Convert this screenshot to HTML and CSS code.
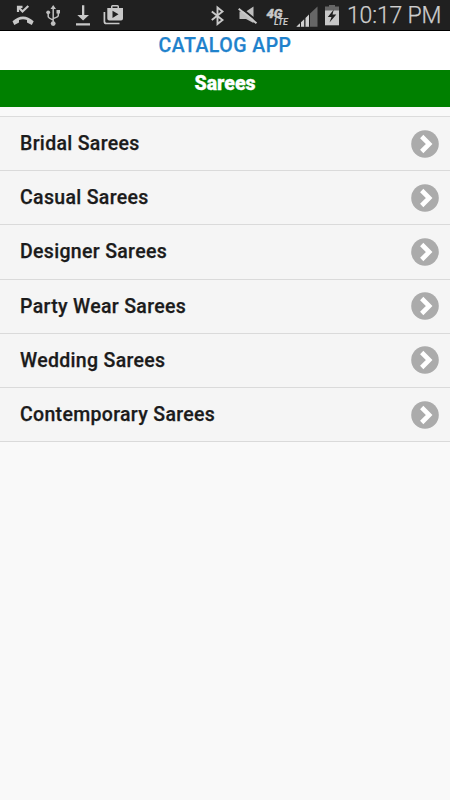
FILE: index.html
```html
<!DOCTYPE html>
<html lang="en">
<head>
<meta charset="utf-8">
<title>Catalog App</title>
<link rel="stylesheet" href="styles.css">
</head>
<body>
<div class="status">
  <div class="status-icons">
    <svg width="30" height="30" viewBox="8 0 30 30"><path fill="#c8c8c8" d="M12.500 21.200Q23 11.700 33.700 21.200L31.800 25L27 22.600V19.900Q23 18.500 19 19.900V22.600L14.300 25Z"/><path d="M18 12V6.800H22.500M18.300 7L22.500 11.500L28.300 6" fill="none" stroke="#c8c8c8" stroke-width="2.200"/></svg>
    <svg width="30" height="30" viewBox="38 0 30 30"><g fill="none" stroke="#c0c0c0" stroke-width="1.500"><path d="M53.200 8V23M48.200 13V16.500Q48.200 18 53.200 20M58.300 13V15.500Q58.300 17 53.200 18.500"/></g><g fill="#c0c0c0"><path d="M50.500 9L53.200 5L56 9ZM56.500 10H60V13.500H56.500Z"/><circle cx="48.200" cy="12.300" r="1.900"/><circle cx="53.200" cy="23.600" r="2.400"/></g></svg>
    <svg width="30" height="30" viewBox="68 0 30 30"><path fill="#c8c8c8" d="M82 5.200H84.300V15H89L83.100 20.500L77.300 15H82ZM76 23.200H90V25.600H76Z"/></svg>
    <svg width="30" height="30" viewBox="98 0 30 30"><path fill="#c8c8c8" fill-rule="evenodd" d="M107.300 8H111V6.500Q111 5 112.500 5H117.500Q119 5 119 6.500V8H123V18.500Q123 20.500 121 20.500H109.300Q107.300 20.500 107.300 18.500ZM112.500 8H117.500V6.500H112.500ZM112.500 10.800V18L118.500 14.300Z"/><path d="M104.400 12V21.500Q104.400 23.500 106.400 23.500H119.500" fill="none" stroke="#c8c8c8" stroke-width="1.700"/></svg>
  </div>
  <div class="status-icons">
    <svg width="27" height="30" viewBox="205 0 27 30"><path d="M211.800 11.500L222.500 20L217.500 24V7.500L222.500 11.500L211.800 20" fill="none" stroke="#c8c8c8" stroke-width="1.900"/></svg>
    <svg width="31" height="30" viewBox="232 0 31 30"><path fill="#bdbdbd" d="M239.500 11.500H246L253.500 6.500V23L246 19H239.500Z"/><path d="M239.500 6.700L258 21.700" stroke="#202020" stroke-width="2"/><path d="M238.700 8.800L256.500 23.200" stroke="#c8c8c8" stroke-width="2"/></svg>
    <svg class="network" width="30" height="30" viewBox="263 0 30 30"><text class="net-gen" x="266.500" y="17.800" textLength="16" lengthAdjust="spacingAndGlyphs">4G</text><text class="net-lte" x="274" y="25" textLength="14" lengthAdjust="spacingAndGlyphs">LTE</text></svg>
    <svg width="28" height="30" viewBox="293 0 28 30"><path fill="#666" d="M296 26.700L317.500 6.500V26.700Z"/><path fill="#202020" d="M299 26.700V23.500L310 13.200V26.700Z"/><path fill="#d2d2d2" d="M296.500 26.700L300 23.200V26.700ZM301 26.700V22.200L304.200 19.200V26.700ZM305.500 26.700V18L309 14.500V26.700Z"/></svg>
    <svg width="22" height="30" viewBox="321 0 22 30"><path fill="#666" d="M329 5H335V6.600H339V11H325V6.600H329Z"/><path fill="#c8c8c8" d="M325 10.500H339V25.300H325Z"/><path fill="#202020" d="M333.800 9.500L327.800 17H331.500L329.500 22.500L336.300 14.500H332.500Z"/></svg>
    <span class="clock">10:17 PM</span>
  </div>
</div>
<header class="brand">CATALOG APP</header>
<h1 class="title">Sarees</h1>
<ul class="list">
  <li><span>Bridal Sarees</span><svg class="go" viewBox="0 0 28 28"><circle cx="14" cy="14" r="13.800"/><path d="M10.700 6.500L18.200 14L10.700 21.500"/></svg></li>
  <li><span>Casual Sarees</span><svg class="go" viewBox="0 0 28 28"><circle cx="14" cy="14" r="13.800"/><path d="M10.700 6.500L18.200 14L10.700 21.500"/></svg></li>
  <li><span>Designer Sarees</span><svg class="go" viewBox="0 0 28 28"><circle cx="14" cy="14" r="13.800"/><path d="M10.700 6.500L18.200 14L10.700 21.500"/></svg></li>
  <li><span>Party Wear Sarees</span><svg class="go" viewBox="0 0 28 28"><circle cx="14" cy="14" r="13.800"/><path d="M10.700 6.500L18.200 14L10.700 21.500"/></svg></li>
  <li><span>Wedding Sarees</span><svg class="go" viewBox="0 0 28 28"><circle cx="14" cy="14" r="13.800"/><path d="M10.700 6.500L18.200 14L10.700 21.500"/></svg></li>
  <li><span>Contemporary Sarees</span><svg class="go" viewBox="0 0 28 28"><circle cx="14" cy="14" r="13.800"/><path d="M10.700 6.500L18.200 14L10.700 21.500"/></svg></li>
</ul>
</body>
</html>
```
FILE: styles.css
```css
* { box-sizing: border-box; }
body {
  margin: 0;
  min-height: 800px;
  background: #f9f9f9;
  font-family: Roboto, "Liberation Sans", sans-serif;
}
.status {
  height: 31px;
  display: flex;
  justify-content: space-between;
  padding: 0 9px 0 8px;
  background: #202020;
  border-bottom: 1px solid #000;
}
.status-icons { display: flex; }
.status-icons svg { display: block; flex: none; }
.clock {
  width: 98px;
  padding-left: 4px;
  font-size: 23px;
  font-weight: 300;
  line-height: 32px;
  white-space: nowrap;
  color: #cfcfcf;
  letter-spacing: -0.150px;
  -webkit-text-stroke: 0.250px #cfcfcf;
}
.network text {
  fill: #c8c8c8;
  font-style: italic;
  font-weight: 900;
}
.network .net-gen { font-size: 12.500px; stroke: #c8c8c8; stroke-width: 0.400px; }
.network .net-lte { font-size: 8.500px; font-weight: 700; }
.brand {
  height: 39px;
  background: #fff;
  color: #1f82cc;
  font-size: 19.500px;
  font-weight: 500;
  line-height: 29px;
  letter-spacing: 0.480px;
  text-align: center;
  -webkit-text-stroke: 0.250px #1f82cc;
}
.title {
  height: 37px;
  margin: 0;
  background: #008000;
  color: #fff;
  font-size: 19.500px;
  font-weight: 900;
  line-height: 27px;
  text-align: center;
  -webkit-text-stroke: 0.300px #fff;
}
.list {
  margin: 9px 0 0;
  padding: 0;
  list-style: none;
  border-top: 1px solid #dcdcdc;
}
.list li {
  height: 54.200px;
  display: flex;
  align-items: center;
  justify-content: space-between;
  padding: 0 11px 0 20px;
  background: #f5f5f5;
  border-bottom: 1px solid #dadada;
  color: #1b1b1b;
  font-size: 19.500px;
  font-weight: 500;
  letter-spacing: 0.320px;
  -webkit-text-stroke: 0.250px #1b1b1b;
}
.go { width: 28px; height: 28px; }
.go circle { fill: #ababab; }
.go path { fill: none; stroke: #fff; stroke-width: 4.600; }
```
